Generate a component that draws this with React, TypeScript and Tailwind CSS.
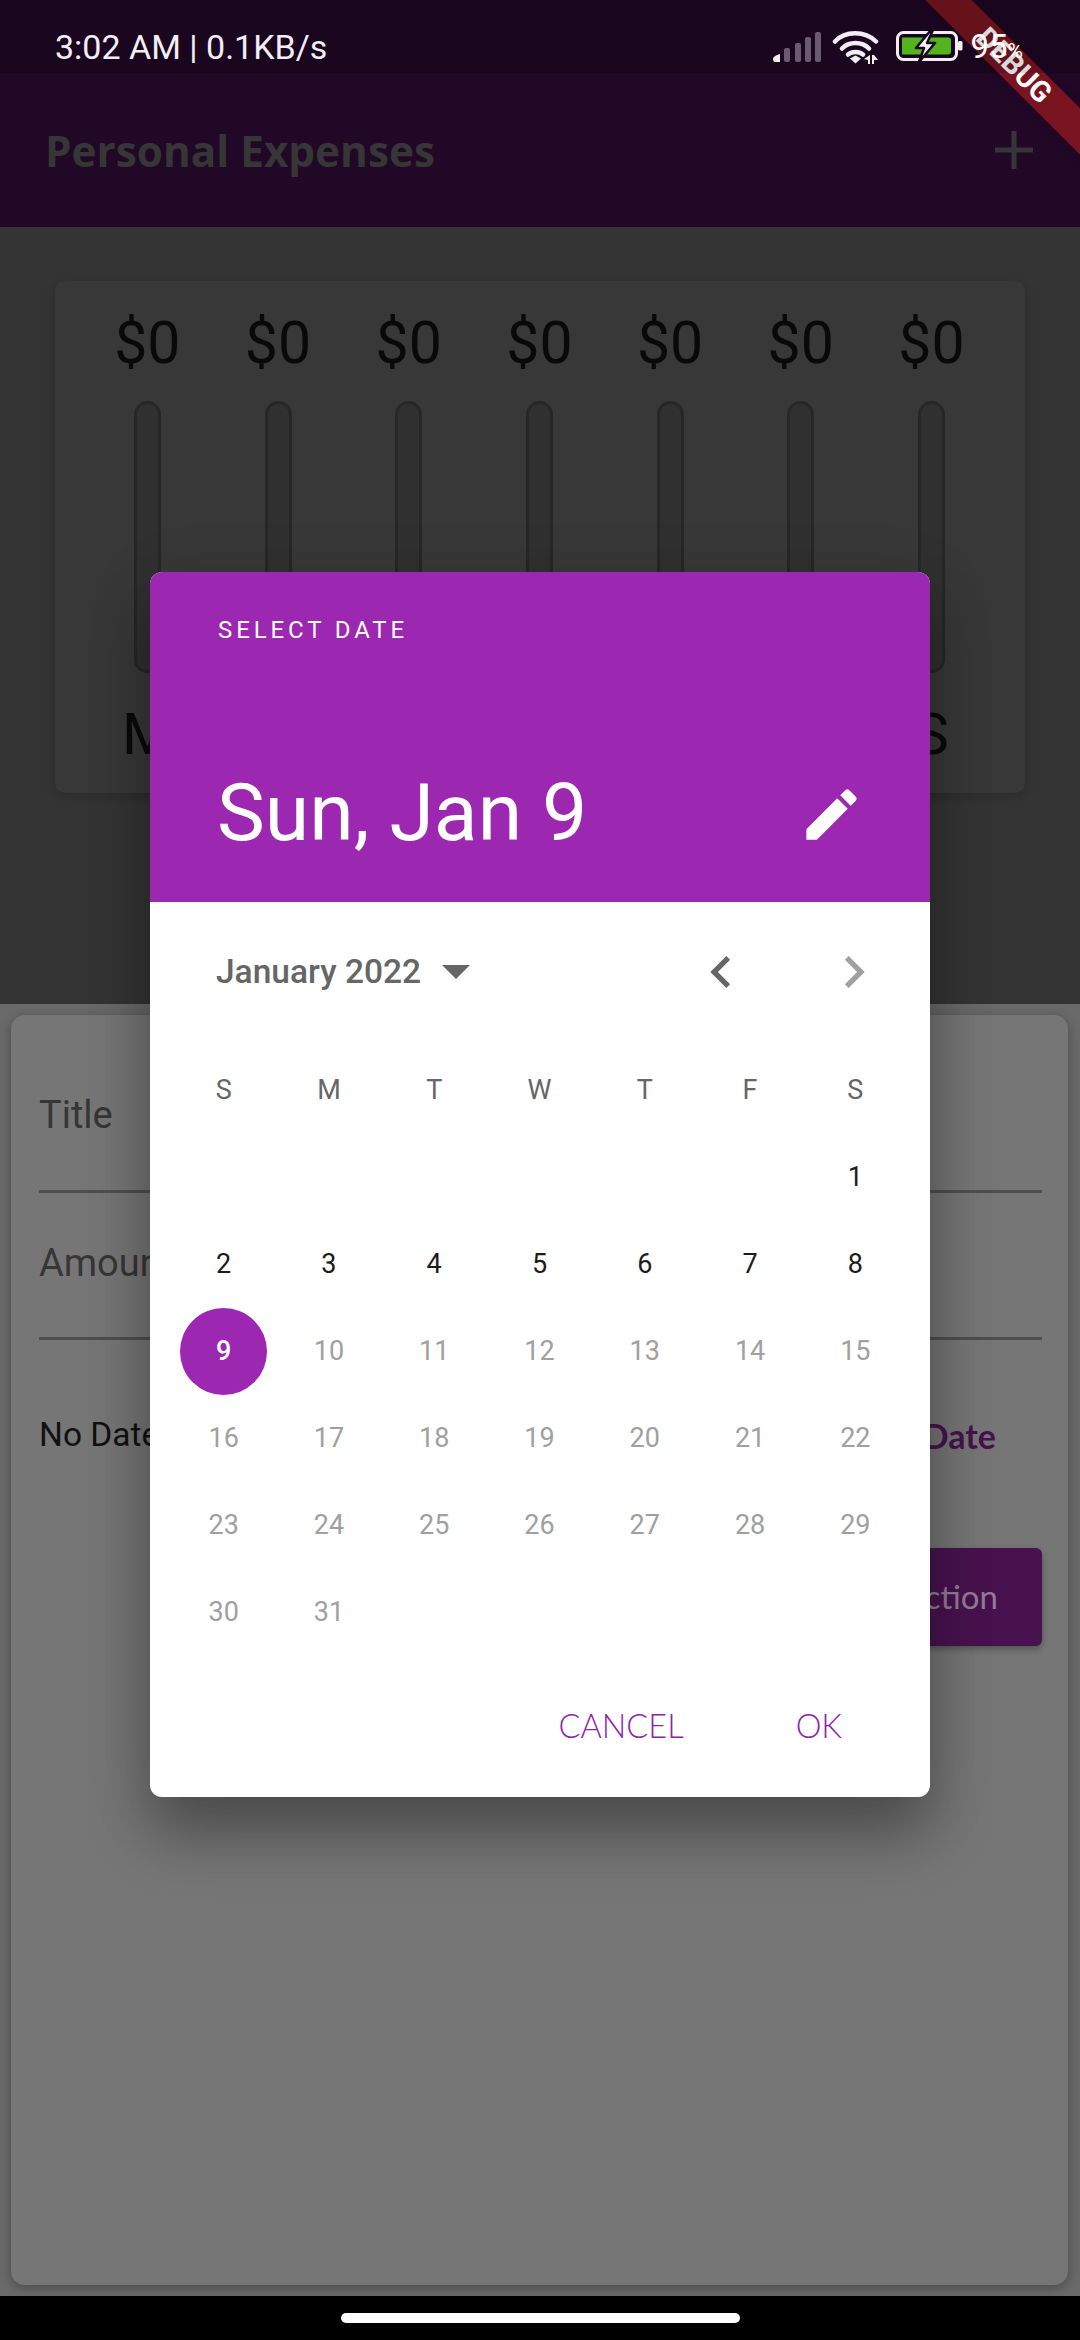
import React from "react";

const roboto = { fontFamily: "Roboto, sans-serif" };

function SignalIcon() {
  return (
    <svg width="48" height="30" viewBox="0 0 48 30" className="block">
      <path d="M0 27c0-2 3-4 7-5v8H2c-1 0-2-1-2-3z" fill="#f2eef3" />
      <rect x="11" y="16" width="6" height="14" rx="2" fill="#6b5b70" />
      <rect x="22" y="11" width="6" height="19" rx="2" fill="#6b5b70" />
      <rect x="32" y="5" width="6" height="25" rx="2" fill="#6b5b70" />
      <rect x="42" y="0" width="6" height="30" rx="2" fill="#6b5b70" />
    </svg>
  );
}

function WifiIcon() {
  return (
    <svg width="48" height="35" viewBox="0 0 48 35" className="block" fill="none">
      <path d="M3 12.500C13 1.500 33 1.500 44 12.500" stroke="#f2eef3" strokeWidth="4.500" strokeLinecap="round" />
      <path d="M10 19.500C17 12 30 12 37 19.500" stroke="#f2eef3" strokeWidth="4.500" strokeLinecap="round" />
      <path d="M16 25.500C20 22 27 22 31 25.500" stroke="#f2eef3" strokeWidth="4.500" strokeLinecap="round" />
      <path d="M18 29.500l5.500-3L29 29.500l-5.500 5z" fill="#f2eef3" />
      <path d="M38 26v9h-2v-4l-4-1z" fill="#f2eef3" />
      <path d="M40 35v-9h2l4 5h-4v4z" fill="#f2eef3" />
    </svg>
  );
}

function BatteryIcon() {
  return (
    <svg width="67" height="31" viewBox="0 0 67 31" className="block">
      <rect x="1.500" y="1.500" width="59" height="27" rx="6" fill="none" stroke="#f2eef3" strokeWidth="3" />
      <rect x="62" y="10" width="4.500" height="9.500" rx="1.500" fill="#f2eef3" />
      <path d="M6 6.500h46a3 3 0 0 1 3 3v11a3 3 0 0 1-3 3H6z" fill="#53b51e" />
      <path d="M35 -1L20 17h8l-5 14 16-19h-8l6-13z" fill="#f6f3f7" stroke="#1b0620" strokeWidth="2.500" strokeLinejoin="round" />
    </svg>
  );
}

function Pencil() {
  return (
    <svg viewBox="0 0 24 24" width="67" height="67" fill="white" className="block mt-[2px]">
      <path d="M3 17.250V21h3.750L17.810 9.940l-3.750-3.750L3 17.250zM20.710 7.040c.39-.39.39-1.020 0-1.410l-2.340-2.340c-.39-.39-1.020-.39-1.410 0l-1.830 1.830 3.750 3.750 1.830-1.830z" />
    </svg>
  );
}

function Chev({ d, fill }: { d: string; fill: string }) {
  return (
    <svg viewBox="0 0 24 24" width="64" height="64" fill={fill} className="block">
      <path d={d} />
    </svg>
  );
}

function ChartColumn({ label }: { label: string }) {
  return (
    <div className="flex flex-col items-center w-[130.7px]">
      <div className="h-[74px] flex items-center text-[59px] leading-none text-[#090909]" style={roboto}>
        $0
      </div>
      <div className="mt-[22px] w-[27px] h-[272px] rounded-full bg-[#303030] border-[3px] border-[#272727]" />
      <div className="mt-[36px] text-[58px] leading-[50px] text-[#090909]" style={roboto}>
        {label}
      </div>
    </div>
  );
}

const weekdays = ["S", "M", "T", "W", "T", "F", "S"];

function DayCell({ day }: { day: number | null }) {
  if (day === null) return <div className="h-[87px]" />;
  const selected = day === 9;
  return (
    <div className="h-[87px] flex items-center justify-center">
      {selected ? (
        <div className="w-[87px] h-[87px] rounded-full bg-[#9c27b0] text-white font-medium flex items-center justify-center text-[27px]">
          9
        </div>
      ) : (
        <span className={day < 9 ? "text-[27px] text-[#1c1c1c]" : "text-[27px] text-[#a0a0a0]"}>{day}</span>
      )}
    </div>
  );
}

function DatePicker() {
  const days: (number | null)[] = [null, null, null, null, null, null];
  for (let d = 1; d <= 31; d++) days.push(d);
  return (
    <div
      className="absolute left-[150px] top-[572px] w-[780px] h-[1225px] z-10 bg-white rounded-[12px] overflow-hidden"
      style={roboto}
    >
      <div className="h-[330px] bg-[#9c27b0] pl-[67px] pr-[65px] flex flex-col">
        <div className="mt-[43px] ml-[1px] text-[24px] leading-[30px] tracking-[3.900px] text-white">SELECT DATE</div>
        <div className="mt-[123px] flex items-center justify-between h-[90px]">
          <span className="text-[80.500px] leading-[90px] text-white">Sun, Jan 9</span>
          <Pencil />
        </div>
      </div>
      <div className="mt-[35px] h-[70px] pl-[66px] pr-[44px] flex items-center relative">
        <span className="text-[33.500px] font-medium text-[#666666]">January 2022</span>
        <span className="ml-[21px] w-0 h-0 border-l-[14px] border-r-[14px] border-t-[14px] border-l-transparent border-r-transparent border-t-[#666666]" />
        <div className="ml-auto flex items-center gap-[69px]">
          <Chev d="M15.410 7.410L14 6l-6 6 6 6 1.410-1.410L10.830 12z" fill="#666666" />
          <Chev d="M10 6L8.590 7.410 13.170 12l-4.580 4.590L10 18l6-6z" fill="#a0a0a0" />
        </div>
      </div>
      <div className="mt-[40px] ml-[21px] w-[737px] grid grid-cols-7">
        {weekdays.map((w, i) => (
          <div key={i} className="h-[87px] flex items-center justify-center text-[27px] text-[#666666]">
            {w}
          </div>
        ))}
        {days.map((d, i) => (
          <DayCell key={i} day={d} />
        ))}
      </div>
      <div
        className="mt-[45px] flex justify-end pr-[88px] gap-[112px] text-[32.500px] leading-[50px] text-[#8e24aa] font-light"
        style={{ fontFamily: "Lato, sans-serif" }}
      >
        <span>CANCEL</span>
        <span>OK</span>
      </div>
    </div>
  );
}

export default function App() {
  return (
    <div className="relative w-[1080px] h-[2340px] overflow-hidden flex flex-col bg-black">
      {/* status bar overlay */}
      <div className="absolute left-0 top-0 w-[1080px] h-[73px] z-30 bg-black/15 flex items-center pt-[20px] pl-[55px] pr-[57px] text-[#f2eef3]">
        <span className="text-[34px] leading-none" style={roboto}>
          3:02 AM | 0.1KB/s
        </span>
        <div className="ml-auto flex items-center">
          <SignalIcon />
          <div className="ml-[11px]">
            <WifiIcon />
          </div>
          <div className="ml-[16px]">
            <BatteryIcon />
          </div>
          <span className="ml-[8px] flex items-baseline text-[33px] leading-none text-white" style={roboto}>
            95<span className="text-[21px]">%</span>
          </span>
        </div>
      </div>

      {/* debug ribbon */}
      <div className="absolute left-[864px] top-[49px] w-[300px] h-[33px] z-20 rotate-45 bg-[#b71c1c]/60 shadow-[0_0_8px_rgba(0,0,0,0.2)] flex items-center justify-center">
        <span className="text-[29px] leading-none font-bold text-white" style={roboto}>
          DEBUG
        </span>
      </div>

      {/* app bar */}
      <header className="h-[227px] shrink-0 bg-[#200826] pt-[73px] pl-[45px] pr-[47px] flex items-center justify-between">
        <h1 className="mt-[2px] text-[42.300px] leading-none font-bold text-[#363636]" style={{ fontFamily: '"Open Sans", sans-serif' }}>
          Personal Expenses
        </h1>
        <svg width="38" height="38" viewBox="0 0 38 38" className="block">
          <path d="M16.500 0h5v16.500H38v5H21.500V38h-5V21.500H0v-5h16.500z" fill="#363636" />
        </svg>
      </header>

      {/* chart region */}
      <section className="h-[777px] shrink-0 bg-[#343434] pt-[54px] px-[55px]">
        <div className="h-[512px] rounded-[10px] bg-[#383838] shadow-[0_3px_10px_rgba(0,0,0,0.18)] pt-[24px] pl-[27px] pr-[27px] flex">
          {["M", "T", "W", "T", "F", "S", "S"].map((l, i) => (
            <ChartColumn key={i} label={l} />
          ))}
        </div>
      </section>

      {/* bottom sheet region */}
      <section className="flex-1 bg-[#6a6a6a] pt-[11px] pl-[11px] pr-[12px] pb-[11px] flex">
        <div className="flex-1 rounded-[14px] bg-[#767676] shadow-[0_3px_12px_rgba(0,0,0,0.3)] pl-[28px] pt-[79px]" style={roboto}>
          <div className="text-[38px] leading-[42px] text-[#363636]">Title</div>
          <div className="mt-[54px] h-[3px] w-[1003px] bg-[#4f4f4f]" />
          <div className="mt-[49px] text-[38px] leading-[42px] text-[#363636]">Amount</div>
          <div className="mt-[53px] h-[3px] w-[1003px] bg-[#4f4f4f]" />
          <div className="mt-[70px] pr-[46px] flex items-center justify-between w-[1003px] h-[50px]">
            <span className="text-[33.500px] text-[#111111]">No Date Chosen!</span>
            <span className="text-[34px] font-bold text-[#48124f]" style={{ fontFamily: "Lato, sans-serif" }}>
              Choose Date
            </span>
          </div>
          <div className="mt-[88px] flex justify-end w-[1003px]">
            <div
              className="w-[380px] h-[98px] rounded-[6px] bg-[#48124f] shadow-[0_3px_6px_rgba(0,0,0,0.3)] flex items-center justify-end pr-[44px] text-[33px] text-[#927c96]"
              style={{ fontFamily: "Lato, sans-serif" }}
            >
              Add Transaction
            </div>
          </div>
        </div>
      </section>

      {/* navigation bar */}
      <footer className="h-[44px] shrink-0 bg-black flex items-center justify-center">
        <div className="w-[399px] h-[10px] rounded-full bg-white" />
      </footer>

      {/* dialog soft shadow */}
      <div className="absolute left-[150px] top-[572px] w-[780px] h-[1225px] rounded-[12px] shadow-[0_38px_60px_rgba(0,0,0,0.3),0_14px_70px_rgba(0,0,0,0.12)] z-[5]" />
      <DatePicker />
    </div>
  );
}
